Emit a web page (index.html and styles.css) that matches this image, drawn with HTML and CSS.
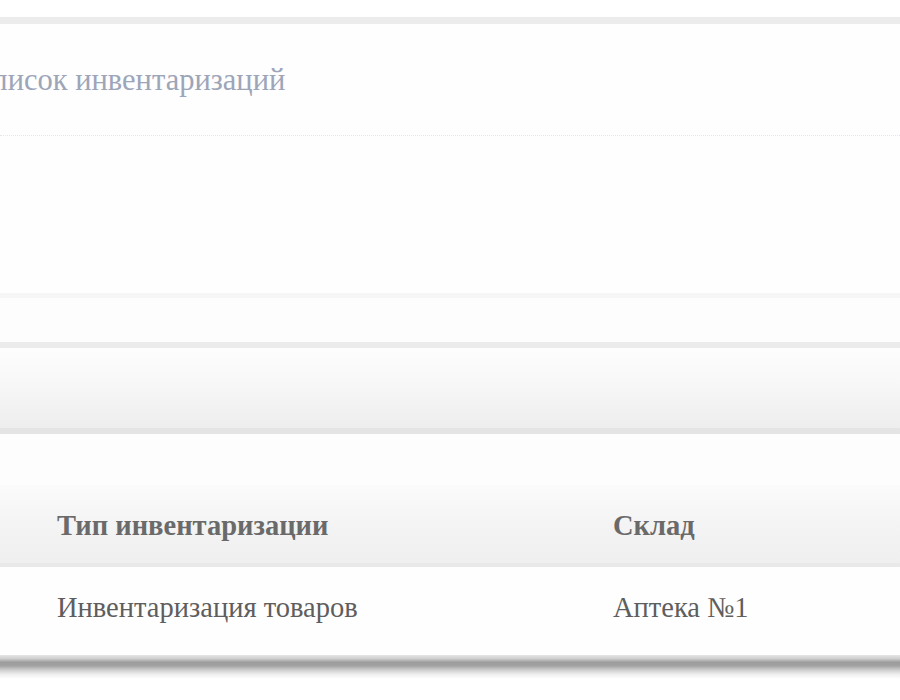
FILE: index.html
```html
<!DOCTYPE html>
<html lang="ru">
<head>
<meta charset="utf-8">
<title>Список инвентаризаций</title>
<link rel="stylesheet" href="styles.css">
</head>
<body>
<div class="page">
  <div class="top-gap"></div>
  <section class="panel">
    <div class="panel-head">
      <h1 class="title">Список инвентаризаций</h1>
    </div>
    <div class="panel-body"></div>
  </section>
  <div class="spacer-a"></div>
  <div class="toolbar"></div>
  <div class="spacer-b"></div>
  <div class="grid">
    <div class="grid-head">
      <div class="cell">Тип инвентаризации</div>
      <div class="cell">Склад</div>
    </div>
    <div class="grid-row">
      <div class="cell">Инвентаризация товаров</div>
      <div class="cell">Аптека №1</div>
    </div>
  </div>
  <div class="grid-shadow"></div>
</div>
</body>
</html>
```

FILE: styles.css
```css
* { box-sizing: border-box; }

html, body {
  margin: 0;
  padding: 0;
  background: #ffffff;
}

body {
  font-family: "Liberation Serif", "Times New Roman", serif;
  overflow: hidden;
}

.page {
  width: 900px;
  height: 700px;
  display: flex;
  flex-direction: column;
}

.top-gap {
  flex: none;
  height: 17px;
  background: #ffffff;
}

.panel {
  flex: none;
  border-top: 7px solid #ececec;
  background: #fefefe;
}

.panel-head {
  height: 112px;
  padding-top: 39px;
  border-bottom: 1px dotted #e4e6ea;
}

.title {
  margin: 0 0 0 -29px;
  font-size: 30.5px;
  line-height: 34px;
  font-weight: normal;
  color: #9da5b9;
  white-space: nowrap;
}

.panel-body {
  height: 162px;
  border-bottom: 5px solid #f6f6f6;
}

.spacer-a {
  flex: none;
  height: 44px;
  background: #fdfdfd;
}

.toolbar {
  flex: none;
  height: 92px;
  border-top: 6px solid #ebebeb;
  border-bottom: 6px solid #e4e4e4;
  background: linear-gradient(#fdfdfd 0%, #f9f9f9 35%, #f1f1f1 80%, #eeeeee 100%);
}

.spacer-b {
  flex: none;
  height: 51px;
  background: #fdfdfd;
}

.grid {
  flex: none;
  display: flex;
  flex-direction: column;
}

.grid-head,
.grid-row {
  display: grid;
  grid-template-columns: 613px 1fr;
  align-items: center;
}

.grid-head {
  height: 82px;
  padding-top: 4px;
  border-bottom: 4px solid #e9e9e9;
  background: linear-gradient(#fbfbfb 0%, #f4f4f4 50%, #efefef 100%);
  font-weight: bold;
  color: #6a6a6a;
}

.grid-row {
  height: 88px;
  padding-bottom: 6px;
  background: #fefefe;
  color: #5e5e5e;
}

.cell {
  font-size: 28.5px;
  line-height: 32px;
  white-space: nowrap;
}

.grid-head .cell:first-child,
.grid-row .cell:first-child {
  padding-left: 57px;
}

.grid-shadow {
  flex: none;
  height: 24px;
  background: linear-gradient(#e6e6e6 0%, #cfcfcf 15%, #9c9c9c 30%, #a2a2a2 45%, #cdcdcd 62%, #eeeeee 80%, #ffffff 100%);
}
```
